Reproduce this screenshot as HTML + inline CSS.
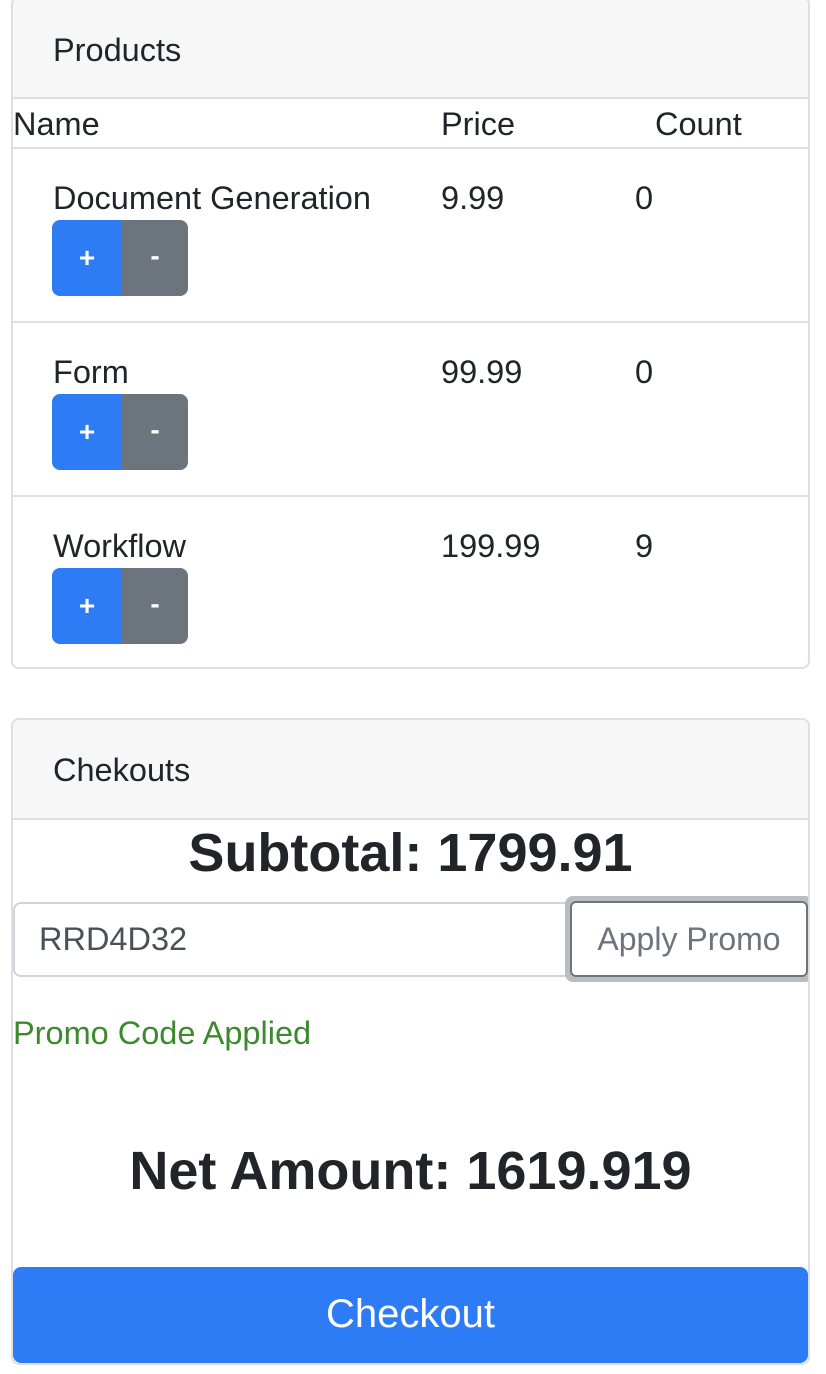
<!DOCTYPE html>
<html><head><style>
*{box-sizing:border-box;margin:0;padding:0}
body{width:826px;height:1374px;background:#fff;font-family:"Liberation Sans",sans-serif;color:#212529;position:relative;overflow:hidden}
.a{position:absolute}
.card{position:absolute;left:11px;width:799px;border:2px solid #dfdfdf;border-radius:8px;overflow:hidden}
.hd{position:absolute;left:0;right:0;top:0;background:#f7f7f7;border-bottom:2px solid #dfdfdf}
.t{font-size:32.5px;line-height:36px;white-space:nowrap}
.line{position:absolute;left:0;right:0;height:2px;background:#dfdfdf}
.bp{position:absolute;width:70px;height:76px;background:#2d7cf6;border-radius:8px 0 0 8px;color:#fff;font-size:28px;font-weight:bold;text-align:center;line-height:76px}
.bm{position:absolute;width:66px;height:76px;background:#6c747d;border-radius:0 8px 8px 0;color:#fff;font-size:28px;font-weight:bold;text-align:center;line-height:72px}
</style></head><body>
<div class="card" style="top:-4px;height:673px">
 <div class="hd" style="height:101px"></div>
 <div class="a t" style="left:40px;top:34px">Products</div>
 <div class="a t" style="left:0;top:108px">Name</div>
 <div class="a t" style="left:428px;top:108px">Price</div>
 <div class="a t" style="left:642px;top:108px">Count</div>
 <div class="line" style="top:149px"></div>
 <div class="a t" style="left:40px;top:182px">Document Generation</div>
 <div class="a t" style="left:428px;top:182px">9.99</div>
 <div class="a t" style="left:622px;top:182px">0</div>
 <div class="bp" style="left:39px;top:222px">+</div><div class="bm" style="left:109px;top:222px">-</div>
 <div class="line" style="top:323px"></div>
 <div class="a t" style="left:40px;top:356px">Form</div>
 <div class="a t" style="left:428px;top:356px">99.99</div>
 <div class="a t" style="left:622px;top:356px">0</div>
 <div class="bp" style="left:39px;top:396px">+</div><div class="bm" style="left:109px;top:396px">-</div>
 <div class="line" style="top:497px"></div>
 <div class="a t" style="left:40px;top:530px">Workflow</div>
 <div class="a t" style="left:428px;top:530px">199.99</div>
 <div class="a t" style="left:622px;top:530px">9</div>
 <div class="bp" style="left:39px;top:570px">+</div><div class="bm" style="left:109px;top:570px">-</div>
</div>
<div class="card" style="top:718px;height:647px">
 <div class="hd" style="height:100px"></div>
 <div class="a t" style="left:40px;top:32px">Chekouts</div>
 <div class="a" style="left:0;right:0;top:100px;text-align:center;font-size:54px;font-weight:bold;line-height:66px">Subtotal: 1799.91</div>
 <div class="a" style="left:0;top:182px;width:560px;height:75px;border:2px solid #ced4da;border-right:none;border-radius:8px 0 0 8px"></div>
 <div class="a t" style="left:26px;top:201px;color:#495057">RRD4D32</div>
 <div class="a" style="left:552px;top:176px;width:248px;height:86px;border:6px solid #b9bdc2;border-radius:8px"></div>
 <div class="a" style="left:557px;top:181px;width:238px;height:76px;border:2px solid #6c747d;border-radius:6px;color:#6c747d;font-size:32px;text-align:center;line-height:72px;white-space:nowrap">Apply Promo</div>
 <div class="a t" style="left:0;top:295px;color:#3c8a2e">Promo Code Applied</div>
 <div class="a" style="left:0;right:0;top:418px;text-align:center;font-size:54px;font-weight:bold;line-height:66px">Net Amount: 1619.919</div>
 <div class="a" style="left:0;right:0;top:547px;height:96px;background:#2d7cf6;border-radius:8px;color:#fff;font-size:40px;text-align:center;line-height:94px">Checkout</div>
</div>
</body></html>
